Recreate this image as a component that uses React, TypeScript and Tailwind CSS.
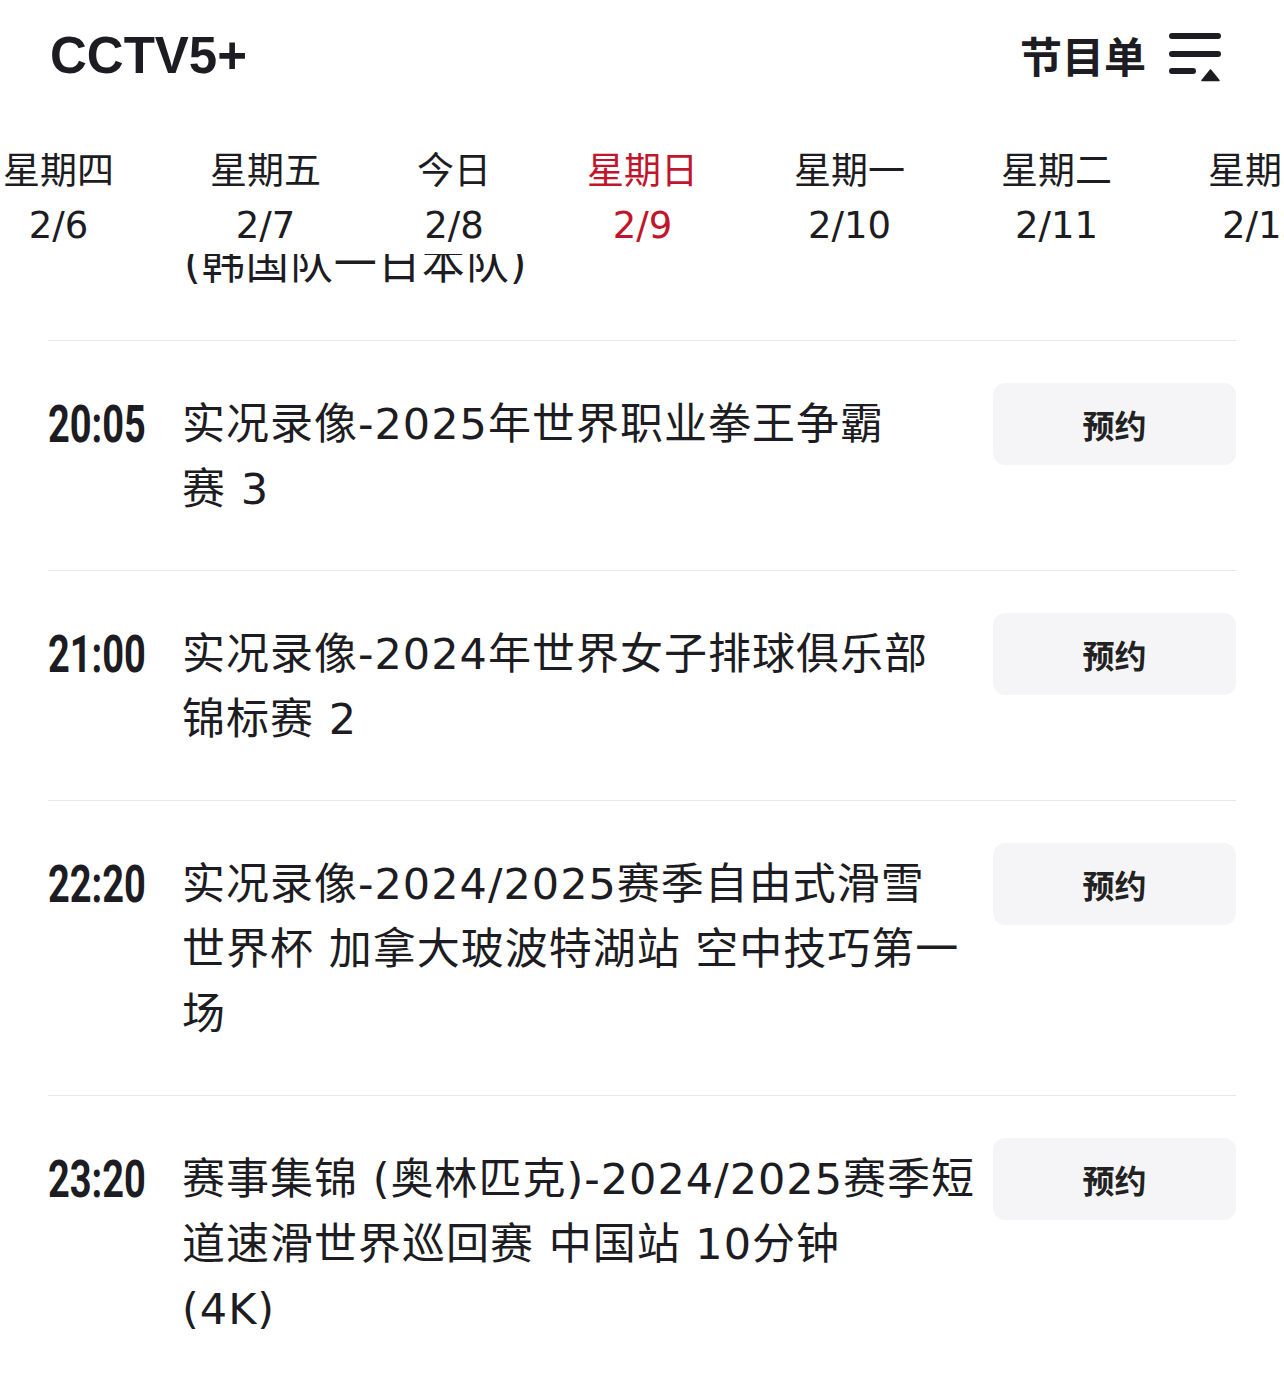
import React from "react";

const CJK = '"Noto Sans CJK SC", sans-serif';
const MIX = '"DejaVu Sans", "Noto Sans CJK SC", sans-serif';

const days = [
  { name: "星期四", date: "2/6" },
  { name: "星期五", date: "2/7" },
  { name: "今日", date: "2/8" },
  { name: "星期日", date: "2/9", active: true },
  { name: "星期一", date: "2/10" },
  { name: "星期二", date: "2/11" },
  { name: "星期三", date: "2/12" },
];

const programs = [
  { time: "20:05", lines: ["实况录像-2025年世界职业拳王争霸", "赛 3"] },
  { time: "21:00", lines: ["实况录像-2024年世界女子排球俱乐部", "锦标赛 2"] },
  {
    time: "22:20",
    lines: ["实况录像-2024/2025赛季自由式滑雪", "世界杯 加拿大玻波特湖站 空中技巧第一", "场"],
  },
  {
    time: "23:20",
    lines: ["赛事集锦 (奥林匹克)-2024/2025赛季短", "道速滑世界巡回赛 中国站 10分钟", "(4K)"],
  },
];

const MenuIcon = () => (
  <svg width="56" height="56" viewBox="0 0 56 56" fill="none">
    <path d="M6 9h46M6 27h46M6 44h21" stroke="#1c1c22" strokeWidth="6" strokeLinecap="round" />
    <path d="M36 53.5 L44.5 43 L53 53.5 Z" fill="#1c1c22" stroke="#1c1c22" strokeWidth="1.5" strokeLinejoin="round" />
  </svg>
);

export default function App() {
  return (
    <div className="min-h-[1395px] w-[1284px] overflow-hidden bg-white text-[#1c1c22]">
      {/* header */}
      <div className="flex h-[110px] items-center justify-between pl-[50px] pr-[62px]">
        <div
          className="text-[51px] font-bold leading-none"
          style={{ fontFamily: '"Liberation Sans", Arial, sans-serif' }}
        >
          CCTV5+
        </div>
        <div className="flex items-center gap-[20px]">
          <span className="text-[42px] font-bold leading-none" style={{ fontFamily: CJK }}>
            节目单
          </span>
          <MenuIcon />
        </div>
      </div>

      {/* day tabs */}
      <div className="flex gap-[96px] overflow-hidden whitespace-nowrap pl-[3px] pt-[37px]" style={{ fontFamily: MIX }}>
        {days.map((d) => (
          <div
            key={d.date}
            className={`flex shrink-0 flex-col items-center ${d.active ? "text-[#c2142b]" : "text-[#1c1c22]"}`}
          >
            <span className="text-[37px] leading-[50px]">{d.name}</span>
            <span className="mt-[5px] text-[37px] leading-[48px]">{d.date}</span>
          </div>
        ))}
      </div>

      {/* list, scrolled so the previous item's last line sits under the tabs */}
      <div className="px-[48px]" style={{ fontFamily: MIX }}>
        <div className="mt-[4px] flex h-[40px] items-end overflow-hidden pl-[136px]">
          <div className="translate-y-[3px] whitespace-nowrap text-[43px] leading-[65px] tracking-[1px]">
            (韩国队一日本队)
          </div>
        </div>
        <div className="h-[46px]" />

        {programs.map((p) => (
          <div key={p.time} className="flex border-t border-[#e8e8e8] pb-[48px] pt-[42px]">
            <div className="mt-[9px] w-[134px] shrink-0 leading-[65px]">
              <span
                className="inline-block origin-left scale-x-[0.73] text-[52px] font-bold"
                style={{ fontFamily: "Roboto, sans-serif" }}
              >
                {p.time}
              </span>
            </div>
            <div className="mt-[9px] flex-1 text-[43px] leading-[65px] tracking-[1px]">
              {p.lines.map((l) => (
                <div key={l} className="whitespace-nowrap">
                  {l}
                </div>
              ))}
            </div>
            <button
              className="flex h-[82px] w-[243px] shrink-0 items-center justify-center rounded-[12px] bg-[#f5f5f7] text-[32px] font-bold text-[#222]"
              style={{ fontFamily: CJK }}
            >
              预约
            </button>
          </div>
        ))}
      </div>
    </div>
  );
}
